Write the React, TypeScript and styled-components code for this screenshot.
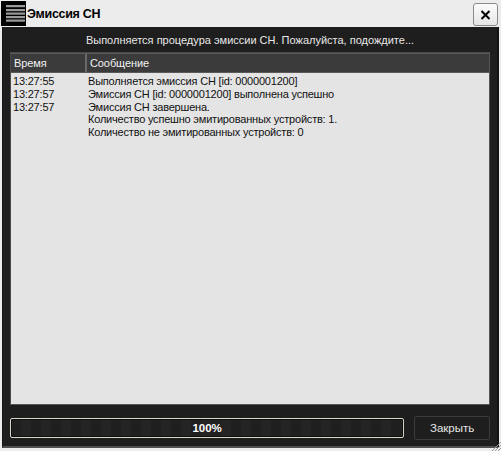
import React from "react";
import styled, { createGlobalStyle } from "styled-components";

const Global = createGlobalStyle`
  html, body { margin: 0; padding: 0; background: #ececec; }
  body { font-family: "Liberation Sans", "DejaVu Sans", sans-serif; }
`;

const Window = styled.div`
  position: relative;
  width: 501px;
  height: 451px;
  background: #ececec;
  display: flex;
  flex-direction: column;
  box-sizing: border-box;
  overflow: hidden;
`;

const TitleBar = styled.div`
  height: 27px;
  display: flex;
  align-items: center;
  padding: 0 3px 0 1px;
  box-sizing: border-box;
`;

const AppIcon = styled.svg`
  width: 25px;
  height: 25px;
  flex: none;
`;

const Title = styled.div`
  flex: 1;
  margin-left: 1px;
  font-size: 12.5px;
  font-weight: bold;
  color: #000;
  letter-spacing: -0.3px;
`;

const CloseButton = styled.button`
  width: 25px;
  height: 23px;
  margin-top: 2px;
  padding: 0;
  border: 1px solid #8a8a86;
  border-radius: 3px;
  background: linear-gradient(#fbfbfb, #e6e6e6);
  display: flex;
  align-items: center;
  justify-content: center;
`;

const Body = styled.div`
  flex: 1;
  margin: 0 2px 3px 2px;
  background: #1e1e1e;
  border-left: 1px solid #141414;
  border-right: 2px solid #141414;
  border-bottom: 2px solid #505050;
  display: flex;
  flex-direction: column;
  padding: 0 7px 0 7px;
`;

const Status = styled.div`
  height: 25px;
  display: flex;
  align-items: center;
  justify-content: center;
  color: #e8e8e8;
  font-size: 11px;
`;

const ListBox = styled.div`
  height: 353px;
  background: #e4e4e4;
  border: 1px solid #4a4a4a;
  border-right-color: #555;
  border-bottom-color: #555;
  box-sizing: border-box;
  display: flex;
  flex-direction: column;
`;

const HeaderRow = styled.div`
  height: 20px;
  display: flex;
  background: #3b3b3b;
  border-top: 1px solid #5a5a5a;
  border-bottom: 1px solid #5a5a5a;
  box-sizing: border-box;
`;

const HeaderCell = styled.div<{ $w?: number }>`
  ${(p) => (p.$w ? `width: ${p.$w}px; flex: none;` : "flex: 1;")}
  color: #f2f2f2;
  font-size: 11px;
  letter-spacing: -0.1px;
  display: flex;
  align-items: center;
  padding-left: 3px;
  box-sizing: border-box;
  border-right: 2px solid #6a6a6a;
  &:last-child { border-right: none; }
`;

const Rows = styled.div`
  padding-top: 2px;
`;

const Row = styled.div`
  display: flex;
  height: 12.8px;
  line-height: 12.8px;
  font-size: 11px;
  letter-spacing: -0.2px;
  color: #111;
`;

const Cell = styled.div<{ $w?: number }>`
  ${(p) => (p.$w ? `width: ${p.$w}px; flex: none;` : "flex: 1;")}
  box-sizing: border-box;
  padding-left: 2px;
  white-space: nowrap;
`;

const Footer = styled.div`
  display: flex;
  align-items: center;
  gap: 10px;
  margin-top: 11px;
`;

const Progress = styled.div`
  width: 396px;
  height: 20px;
  box-sizing: border-box;
  border: 1px solid #d9d4c4;
  border-radius: 2px;
  background: repeating-linear-gradient(90deg, #1f1f1f 0 10px, #242424 10px 20px);
  display: flex;
  align-items: center;
  justify-content: center;
  color: #fff;
  font-weight: bold;
  font-size: 11.5px;
  box-shadow: inset 0 0 0 1px #0e0e0e;
`;

const ActionButton = styled.button`
  width: 76px;
  height: 24px;
  background: #1e1e1e;
  border: 1px solid #3a3a3a;
  border-radius: 2px;
  color: #e6e6e6;
  font-family: "Liberation Sans", "DejaVu Sans", sans-serif;
  font-size: 11.5px;
  padding: 0;
`;

const Grip = styled.svg`
  position: absolute;
  right: 0;
  bottom: 0;
  width: 11px;
  height: 11px;
`;

const rows: [string, string][] = [
  ["13:27:55", "Выполняется эмиссия СН [id: 0000001200]"],
  ["13:27:57", "Эмиссия СН [id: 0000001200] выполнена успешно"],
  ["13:27:57", "Эмиссия СН завершена."],
  ["", "Количество успешно эмитированных устройств: 1."],
  ["", "Количество не эмитированных устройств: 0"],
];

export default function App() {
  return (
    <>
      <Global />
      <Window>
        <TitleBar>
          <AppIcon viewBox="0 0 25 25">
            <rect x="0" y="0" width="25" height="25" fill="#000" />
            {[4, 8, 11.5, 15, 18.5].map((y) => (
              <rect key={y} x="5" y={y} width="19" height="2.2" fill="#9a9a9a" />
            ))}
          </AppIcon>
          <Title>Эмиссия СН</Title>
          <CloseButton aria-label="close">
            <svg width="11" height="10" viewBox="0 0 11 10">
              <path d="M1.5 1 L9.5 9 M9.5 1 L1.5 9" stroke="#000" strokeWidth="2" />
            </svg>
          </CloseButton>
        </TitleBar>
        <Body>
          <Status>Выполняется процедура эмиссии СН. Пожалуйста, подождите...</Status>
          <ListBox>
            <HeaderRow>
              <HeaderCell $w={76}>Время</HeaderCell>
              <HeaderCell>Сообщение</HeaderCell>
            </HeaderRow>
            <Rows>
              {rows.map(([t, m], i) => (
                <Row key={i}>
                  <Cell $w={75}>{t}</Cell>
                  <Cell>{m}</Cell>
                </Row>
              ))}
            </Rows>
          </ListBox>
          <Footer>
            <Progress>100%</Progress>
            <ActionButton>Закрыть</ActionButton>
          </Footer>
        </Body>
        <Grip viewBox="0 0 11 11">
          {[3, 6, 9].map((o) => (
            <path key={o} d={`M${11 - o} 11 L11 ${11 - o}`} stroke="#9a9a9a" strokeWidth="1" />
          ))}
        </Grip>
      </Window>
    </>
  );
}
